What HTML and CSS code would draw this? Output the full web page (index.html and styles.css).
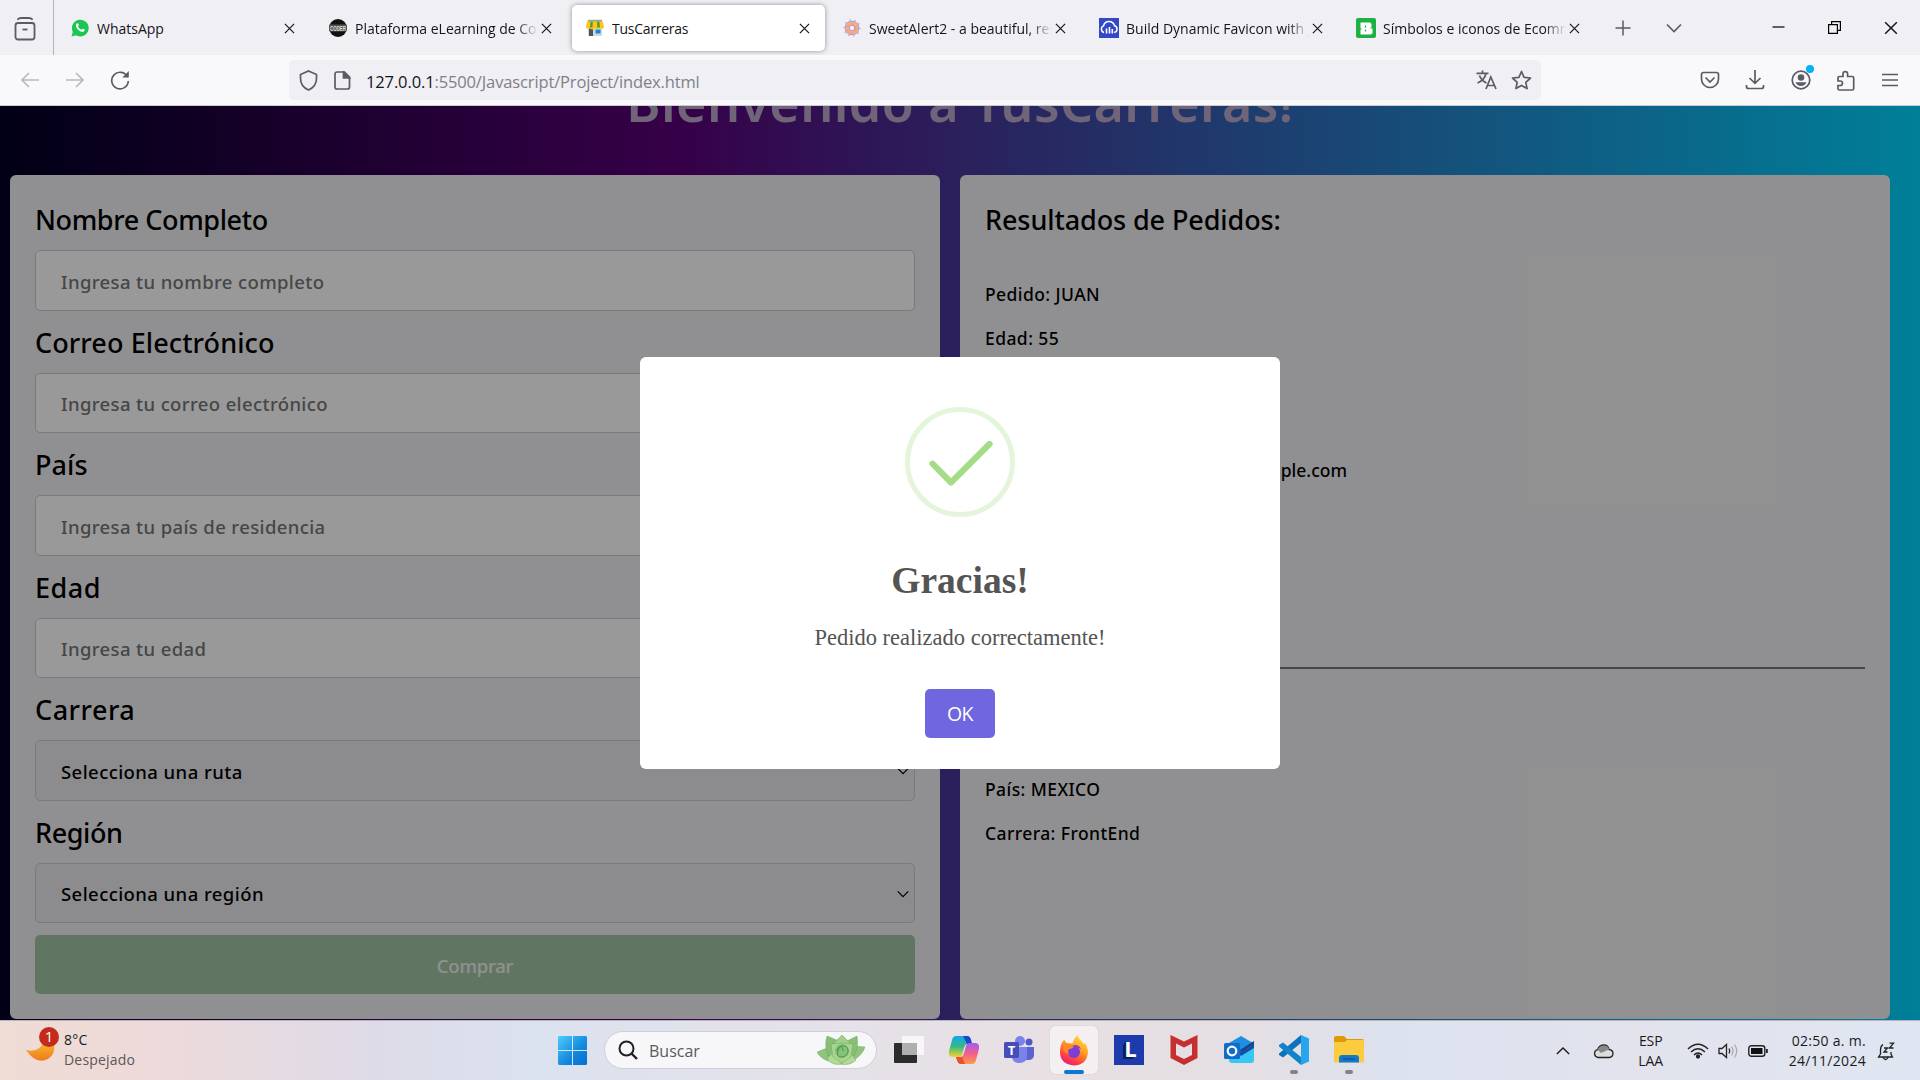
FILE: index.html
```html
<!DOCTYPE html>
<html lang="es">
<head>
<meta charset="utf-8">
<title>TusCarreras</title>
<link rel="stylesheet" href="styles.css">
</head>
<body>
<svg class="defs" aria-hidden="true">
  <symbol id="x" viewBox="0 0 12 12"><path d="M1 1l10 10M11 1L1 11" fill="none" stroke="currentColor" stroke-width="1.3"/></symbol>
  <symbol id="chev" viewBox="0 0 16 16"><path d="M1 4.500l7 7 7-7" fill="none" stroke="currentColor" stroke-width="1.600"/></symbol>
</svg>

<header class="tabs">
  <div class="view"><svg width="22" height="24" viewBox="0 0 22 24" fill="none" stroke="#5b5b66" stroke-width="1.8"><path d="M4 2.200Q5 1 7 1h8q2 0 3 1.200" stroke-linecap="round"/><rect x="1.500" y="6" width="19" height="16.500" rx="2.500"/><path d="M8.500 12.500h5"/></svg></div>
  <div class="tab first">
    <svg class="fav" viewBox="0 0 18 18"><path d="M.5 17.500l1.300-4.600A8.400 8.400 0 1 1 5 16.300z" fill="#1dc552"/><path d="M5.700 4.600c.5-.5 1.200-.5 1.500.2l.6 1.300c.1.500-.5 1-.8 1.300.8 1.700 2 2.700 3.600 3.400.5-.5.9-1.300 1.400-1.100l1.500.8c.5.300 0 1.700-.9 2.100-1.600.8-4-.5-5.600-2.100S4 6.300 5.700 4.600z" fill="#fff"/></svg>
    <span class="name">WhatsApp</span><svg class="close"><use href="#x"/></svg>
  </div>
  <div class="tab">
    <svg class="fav" viewBox="0 0 18 18"><circle cx="9" cy="9" r="9" fill="#111"/><path d="M.8 5.500h16.400a9 9 0 0 1 0 7H.8a9 9 0 0 1 0-7z" fill="#555"/><text x="9" y="11.800" text-anchor="middle" class="coder" textLength="16" lengthAdjust="spacingAndGlyphs">CODER</text></svg>
    <span class="name fade">Plataforma eLearning de Coder</span><svg class="close"><use href="#x"/></svg>
  </div>
  <div class="tab active">
    <svg class="fav" viewBox="0 0 18 18"><path d="M2 6h14v11H2z" fill="#cfd9de"/><path d="M3 9.500h4V17H3z" fill="#46545c"/><path d="M9.500 10.500h5v4h-5z" fill="#1588e8"/><path d="M1.500 2h15L18 7.500a2 2 0 0 1-4 .5 2.500 2.500 0 0 1-5 0 2.500 2.500 0 0 1-5 0 2 2 0 0 1-4-.5z" fill="#ffc60b"/><path d="M4.500 2.500h2.300L6.500 8.500H4zM11 2.500h2.300l.7 6h-2.700z" fill="#4f9a3c"/><path d="M2 .8h14v1.600H2z" fill="#90a4ae"/></svg>
    <span class="name">TusCarreras</span><svg class="close"><use href="#x"/></svg>
  </div>
  <div class="tab">
    <svg class="fav" viewBox="0 0 18 18"><circle cx="9" cy="9" r="8" fill="none" stroke="#b7a3d8" stroke-width="1.500" stroke-dasharray="1.200 3.800"/><circle cx="9" cy="9" r="4.800" fill="none" stroke="#b58acb" stroke-width="5"/><circle cx="9" cy="9" r="4.800" fill="none" stroke="#f3b083" stroke-width="3.600"/><circle cx="8.500" cy="9.500" r="4.500" fill="none" stroke="#e4a08c" stroke-width="1.200" stroke-dasharray="3 2"/></svg>
    <span class="name fade">SweetAlert2 - a beautiful, responsive</span><svg class="close"><use href="#x"/></svg>
  </div>
  <div class="tab">
    <svg class="fav square" viewBox="0 0 20 20"><path fill="#3448c5" d="M0 0h20v20H0z"/><path d="M5 14.500a3.500 3.500 0 0 1-.5-6.600 5.700 5.700 0 0 1 11-.2 3.500 3.500 0 0 1-.3 6.800" fill="none" stroke="#fff" stroke-width="1.500"/><path d="M7.500 10.500v5M10.500 9v6.500M13.300 11v4.500" stroke="#fff" stroke-width="1.600"/></svg>
    <span class="name fade">Build Dynamic Favicon with JS</span><svg class="close"><use href="#x"/></svg>
  </div>
  <div class="tab">
    <svg class="fav square" viewBox="0 0 20 20"><rect width="20" height="20" rx="2" fill="#1cb142"/><path d="M4.500 4.500h10v1h1v4h-1v1h2v5h-1v1h-11v-5h1v-1h-1z" fill="#fff"/><path d="M9.500 7.500v2M9.500 11.500v2" stroke="#1cb142" stroke-width="1.200"/></svg>
    <span class="name fade">Símbolos e iconos de Ecommerce</span><svg class="close"><use href="#x"/></svg>
  </div>
  <div class="newtab">
    <svg width="16" height="16" viewBox="0 0 16 16"><path d="M8 .5v15M.5 8h15" stroke="#5b5b66" stroke-width="1.500"/></svg>
    <svg width="16" height="16" class="grey"><use href="#chev"/></svg>
  </div>
  <div class="winbtns">
    <svg width="13" height="13" viewBox="0 0 13 13"><path d="M.5 6h12" stroke="#000" stroke-width="1.200"/></svg>
    <svg width="13" height="13" viewBox="0 0 13 13" fill="none" stroke="#000" stroke-width="1.200"><path d="M.6 3.600h8.800v8.800H.6zM3.600 3.600V.6h8.800v8.800h-3"/></svg>
    <svg width="14" height="14"><use href="#x"/></svg>
  </div>
</header>

<nav class="bar">
  <div class="nav">
    <svg width="20" height="18" viewBox="0 0 20 18" class="off"><path d="M19 9H2M9 2L2 9l7 7"/></svg>
    <svg width="20" height="18" viewBox="0 0 20 18" class="off"><path d="M1 9h17M11 2l7 7-7 7"/></svg>
    <svg width="20" height="20" viewBox="0 0 20 20"><path d="M17.500 7A8.300 8.300 0 1 0 18.300 11"/><path d="M18.800 1v6.500h-6.500z" fill="#5b5b66" stroke="none"/></svg>
  </div>
  <div class="url">
    <svg width="19" height="21" viewBox="0 0 19 21"><path d="M9.500 1L17.500 4.500v4C17.500 14 14 18 9.500 20 5 18 1.500 14 1.500 8.500v-4z"/></svg>
    <svg width="17" height="19" viewBox="0 0 17 19"><path d="M3 1h7.500L15.500 6v10a2 2 0 0 1-2 2H3a2 2 0 0 1-2-2V3a2 2 0 0 1 2-2z"/><path d="M9.500 1v6h6z" fill="#5b5b66"/></svg>
    <span class="addr"><b>127.0.0.1</b>:5500/Javascript/Project/index.html</span>
    <svg width="21" height="20" viewBox="0 0 21 20"><path d="M.5 3.300h12M6.500.5v3M10 3.500C9 8 5 11.500 1.500 13M3.500 5.500c1 3 4 6 7 7.500M10 19l4.800-12L20 19M11.500 15.500h6.500"/></svg>
    <svg width="21" height="21" viewBox="0 0 21 21"><path d="M10.500 1.500l2.600 5.800 6.400.7-4.700 4.300 1.300 6.300-5.600-3.200-5.600 3.200 1.300-6.300L1.500 8l6.400-.7z" stroke-linejoin="round"/></svg>
  </div>
  <div class="tools">
    <svg width="20" height="18" viewBox="0 0 20 18"><path d="M3.500 1.500h13a2 2 0 0 1 2 2V8a8.500 8.500 0 0 1-17 0V3.500a2 2 0 0 1 2-2z"/><path d="M5.500 6.500L10 11l4.500-4.500"/></svg>
    <svg width="20" height="20" viewBox="0 0 20 20"><path d="M10 0v13M4.500 8L10 13.300 15.500 8M1.500 15v1.500a2 2 0 0 0 2 2h13a2 2 0 0 0 2-2V15"/></svg>
    <span class="acct"><svg width="20" height="20" viewBox="0 0 20 20"><circle cx="10" cy="10" r="8.800"/><circle cx="10" cy="7.500" r="3.300" fill="#5b5b66" stroke="none"/><path d="M4.500 12.300h11Q14 16 10 16t-5.500-3.700z" fill="#5b5b66" stroke="none"/></svg></span>
    <svg width="20" height="21" viewBox="0 0 20 21"><path d="M2 11V8a1.500 1.500 0 0 1 1.500-1.500H7V4a2.300 2.300 0 0 1 4.600 0v2.500h4.600a1.500 1.500 0 0 1 1.500 1.500v10.500a1.500 1.500 0 0 1-1.500 1.500H3.500A1.500 1.500 0 0 1 2 18.500v-3h2.200a2.200 2.200 0 0 0 0-4.500z"/></svg>
    <svg width="16" height="16" viewBox="0 0 16 16"><path d="M0 2.500h16M0 8h16M0 13.500h16"/></svg>
  </div>
</nav>

<main class="page">
  <h1>Bienvenido a TusCarreras!</h1>
  <div class="cols">
    <form class="card">
      <label class="tight">Nombre Completo</label><div class="field">Ingresa tu nombre completo</div>
      <label>Correo Electrónico</label><div class="field">Ingresa tu correo electrónico</div>
      <label>País</label><div class="field">Ingresa tu país de residencia</div>
      <label class="wide">Edad</label><div class="field">Ingresa tu edad</div>
      <label class="wide">Carrera</label><div class="field select">Selecciona una ruta<svg width="12" height="12"><use href="#chev"/></svg></div>
      <label class="tight">Región</label><div class="field select">Selecciona una región<svg width="12" height="12"><use href="#chev"/></svg></div>
      <div class="buy">Comprar</div>
    </form>
    <section class="card results">
      <h2>Resultados de Pedidos:</h2>
      <p>Pedido: JUAN</p>
      <p>Edad: 55</p>
      <p></p>
      <p></p>
      <p class="mail">Correo: juan@example.com</p>
      <hr>
      <p>País: MEXICO</p>
      <p>Carrera: FrontEnd</p>
    </section>
  </div>
  <div class="overlay">
    <div class="modal">
      <svg width="110" height="110" viewBox="0 0 110 110" fill="none"><circle cx="55" cy="55" r="52.500" stroke="#e4f5db" stroke-width="5"/><path d="M27.500 56.700L46 75.500 84.500 37" stroke="#a5dc86" stroke-width="6.200" stroke-linecap="round" stroke-linejoin="round"/></svg>
      <div class="title">Gracias!</div>
      <div class="msg">Pedido realizado correctamente!</div>
      <div class="ok">OK</div>
    </div>
  </div>
</main>

<footer class="task">
  <div class="weather">
    <svg width="36" height="40" viewBox="0 0 36 40"><defs><linearGradient id="mo" x2="0" y2="1"><stop stop-color="#f7b733"/><stop offset="1" stop-color="#ef7c1b"/></linearGradient></defs><path d="M0 23q14 3 17-8l11 1q2 11-6 16-12 6-22-9z" fill="url(#mo)"/><circle cx="23" cy="10" r="10" fill="#c42b1c"/><text x="23" y="15" text-anchor="middle" class="badge">1</text></svg>
    <div class="wtext"><div>8°C</div><div class="dim">Despejado</div></div>
  </div>
  <div class="apps">
    <svg class="win" width="29" height="29" viewBox="0 0 29 29"><defs><linearGradient id="w" x2="1" y2="1"><stop stop-color="#4ccbff"/><stop offset=".6" stop-color="#1287dc"/><stop offset="1" stop-color="#0270d0"/></linearGradient></defs><path d="M1 0h13v14H0V1zM15 0h13l1 1v13H15zM0 15h14v14H1l-1-1zM15 15h14v13l-1 1H15z" fill="url(#w)"/></svg>
    <div class="search">
      <svg width="20" height="20" viewBox="0 0 20 20" fill="none" stroke="#222" stroke-width="2"><circle cx="8.500" cy="8.500" r="7"/><path d="M13.500 13.500l5.500 5.500" stroke-width="2.400"/></svg>
      <span>Buscar</span>
      <svg width="48" height="30" viewBox="0 0 48 30" stroke="#6da864" stroke-width=".5"><path d="M0 17l13-5 6 4 1 9-9 1Q3 23 0 17zM48 12l-12-1-9 14 8 1q10-5 13-14z" fill="#8fc47c"/><path d="M10 1l12 5-2 13-9 2Q7 11 10 1zM40 1l-10 5-4 14 11 1q5-9 3-20z" fill="#86bf74"/><path d="M10 24l7-8 8 13q-10 2-15-5zM39 25l-7-9-8 13q9 2 15-4z" fill="#b3da92"/><path d="M25 0l8 8-8 10-8-10z" fill="#a2d089"/><path d="M14 9l11-1 11 1-2 13-9 6-9-6z" fill="#a8d58f"/><circle cx="25" cy="16" r="6.500" fill="#86c377"/><path d="M20 16q1-5 6-5t5 5-6 6-4-6 4-3 2 3" fill="none" stroke="#4c9455" stroke-width="1"/></svg>
    </div>
    <div class="app"><svg width="30" height="30" viewBox="0 0 30 30"><rect y="8" width="23" height="20" rx="1" fill="#2c2c2a"/><rect x="8" y="1" width="22" height="19" rx="1" fill="#fff" opacity=".7"/><rect x="8" y="8" width="15" height="12" fill="#aaa" opacity=".8"/></svg></div>
    <div class="app"><svg width="30" height="28" viewBox="0 0 30 28"><defs><linearGradient id="ca" x2="0" y2="1"><stop stop-color="#17a4ee"/><stop offset=".5" stop-color="#35ba84"/><stop offset="1" stop-color="#f6d22b"/></linearGradient><linearGradient id="cb" x2="0" y2="1"><stop stop-color="#a35bf5"/><stop offset=".5" stop-color="#f0608a"/><stop offset="1" stop-color="#ff9a4b"/></linearGradient></defs><path d="M7 0h11q3 0 4 4l1 4h-4q-3 0-4 4l-2 7q-1 2-4 2H4q-5 0-4-6L3 4q1-4 4-4z" fill="url(#ca)"/><path d="M14 0h4q3 0 4 4l1 4h-5z" fill="#1b48c8"/><path d="M23 28H12q-3 0-4-4l-1-3h4q3 0 4-4l2-7q1-3 4-3h5q5 0 4 6l-3 11q-1 4-4 4z" fill="url(#cb)"/><path d="M16 28h-4q-3 0-4-4l-1-3h6z" fill="#e5542f"/></svg></div>
    <div class="app"><svg width="30" height="28" viewBox="0 0 30 28"><circle cx="16" cy="5" r="5" fill="#7b83eb"/><circle cx="25" cy="6" r="3.500" fill="#5059c9"/><path d="M21 11h9v8q0 5-6 5h-3z" fill="#5b63d0"/><path d="M8 11h15v9q0 7-7.500 7T8 20z" fill="#7b83eb"/><rect y="6" width="15" height="16" rx="1.500" fill="#464eb8"/><text x="7.500" y="18.500" text-anchor="middle" class="glyph s13">T</text></svg></div>
    <div class="app run tile"><svg width="30" height="31" viewBox="0 0 30 31"><defs><linearGradient id="fx" x1=".8" x2=".3" y2="1"><stop stop-color="#ffe63f"/><stop offset=".45" stop-color="#ff9a22"/><stop offset=".75" stop-color="#ff4740"/><stop offset="1" stop-color="#e6197c"/></linearGradient></defs><path d="M4 6l1.500-1 2 3 6 .5Q15 3 18.500 0q1 4 5 7l1 2 1.500-1Q29 12 29 17q-1 13-14 13.500Q2 29.500 1 18q0-8 3-12z" fill="url(#fx)"/><circle cx="15" cy="17" r="6" fill="#7a3fd8"/><path d="M5 9q5-1 10 2-1 3-5 3-2 2 0 5-5-1-6-5z" fill="#ff8a20"/><path d="M13 11q6-3 9 3-2-1-4-1z" fill="#a033c8"/></svg></div>
    <div class="app"><svg width="30" height="30" viewBox="0 0 30 30"><path fill="#1d3bac" d="M0 0h30v30H0z"/><path d="M9 24V10l3-4v15h9l-3 3z" fill="#0d2150"/><text x="16.500" y="22" text-anchor="middle" class="glyph s22">L</text></svg></div>
    <div class="app"><svg width="28" height="30" viewBox="0 0 28 30"><path d="M.5 0L14 6.500 27.500 0v23L14 30 .5 23zM6 8.500V20l8 4 8-4V8.500l-8 4z" fill="#c5302f" fill-rule="evenodd"/></svg></div>
    <div class="app"><svg width="30" height="28" viewBox="0 0 30 28"><path d="M5 7l12-7 12 7v12H5z" fill="#1f8ee0"/><path d="M13 16L30 5v6l-13 9z" fill="#123f8c"/><path d="M5 14l9 2 16-5v13q0 3-3 3H8q-3 0-3-3z" fill="#38c6f4"/><path d="M14 17L30 7v5L17 20z" fill="#17509f"/><rect y="7" width="16" height="16" rx="1.500" fill="#0f6cc9"/><circle cx="8" cy="15" r="4.300" fill="none" stroke="#fff" stroke-width="2.200"/></svg></div>
    <div class="app dot"><svg width="30" height="30" viewBox="0 0 30 30"><path d="M22 0l8 3.500v23L22 30z" fill="#29a5ee"/><path d="M22 0v8L4 22.500 0 20v-1.500z" fill="#0b73bd"/><path d="M22 30v-8L4 7.500 0 10v1.500z" fill="#1183cc"/></svg></div>
    <div class="app dot"><svg width="30" height="28" viewBox="0 0 30 28"><path d="M0 2q0-2 2-2h8l3 3h15q2 0 2 2v8H0z" fill="#dd9a06"/><path d="M0 6h11l2-2h16l1 1v20q0 1.500-1.500 1.500h-27Q0 26.500 0 25z" fill="#fdcb3e"/><path d="M5 26.500V22q0-3 3-3h14q3 0 3 3v4.500z" fill="#1478c9"/><path d="M9 23h12" stroke="#0c4e91" stroke-width="1.200"/></svg></div>
  </div>
  <div class="tray">
    <svg width="14" height="14" class="up"><use href="#chev"/></svg>
    <svg width="21" height="15" viewBox="0 0 21 15"><path d="M5 13.500a4 4 0 0 1-.5-7.800Q6.500 1 11 1q4 0 5 4.500 4 .5 4 4t-4 4z" fill="#ddd" stroke="#222" stroke-width="1.300"/><path d="M4.500 5.700Q6.500 1.500 11 1.500t5 4L8 9z" fill="#888"/></svg>
    <div class="lang">ESP<br>LAA</div>
    <svg width="22" height="16" viewBox="0 0 22 16" fill="none" stroke="#222" stroke-width="1.500"><path d="M1 6Q11-3.500 21 6M4 9q7-6.500 14 0M7 12q4-4 8 0"/><circle cx="11" cy="13.500" r="1.400" fill="#222"/></svg>
    <svg width="21" height="16" viewBox="0 0 21 16" fill="none" stroke="#222" stroke-width="1.300"><path d="M1 5.500h3L8.500 1.500v13L4 10.500H1z"/><path d="M11 5.500q1.500 2.500 0 5"/><path d="M13.500 3.500q3 4.500 0 9M16.500 1.500q4.500 6.500 0 13" stroke="#aaa"/></svg>
    <svg width="20" height="12" viewBox="0 0 20 12"><rect x=".8" y=".8" width="16" height="10.400" rx="2.500" fill="none" stroke="#222" stroke-width="1.400"/><rect x="3" y="3" width="11.500" height="6" fill="#111"/><path d="M18 4h1.800v4H18z" fill="#222"/></svg>
    <div class="clock">02:50 a. m.<br>24/11/2024</div>
    <svg width="18" height="19" viewBox="0 0 18 19" fill="none" stroke="#222" stroke-width="1.300"><path d="M6 2.500Q3.500 4 3.500 8v4L1.500 15h14L14 12v-2M6 15.500q2.500 4 5 0"/><path d="M7 6h3.500L7 10h3.500M12.500 1.200h4L12.500 6h4"/></svg>
  </div>
</footer>
</body>
</html>
```
FILE: styles.css
```css
* { box-sizing: border-box; }
body { margin: 0; width: 1920px; height: 1080px; overflow: hidden; display: flex; flex-direction: column; font-family: "Open Sans", "Noto Sans", sans-serif; }
svg { display: block; flex: none; }
.defs { display: none; }

.tabs { height: 55px; flex: none; background: #f0eff4; display: flex; padding-right: 22px; color: #15141a; }
.view { width: 54px; border-right: 1px solid #b5b4bb; padding: 17px 0 0 14px; }
.tab { width: 253px; height: 46px; margin: 5px 0 0 4px; padding: 0 16px 0 14px; display: flex; align-items: center; border-radius: 5px; font-size: 14px; }
.tab.first { padding-left: 13px; }
.tab.active { background: #fff; box-shadow: 0 0 5px rgba(0,0,0,.4); letter-spacing: -.25px; padding-right: 15px; }
.fav { width: 18px; height: 18px; }
.fav.square { width: 20px; height: 20px; margin: 0 -1px; }
.coder { font: bold 7px "Liberation Sans", sans-serif; fill: #ddd; }
.name { flex: 1; margin-left: 8px; overflow: hidden; white-space: nowrap; }
.fade { -webkit-mask-image: linear-gradient(90deg, #000 88%, transparent); mask-image: linear-gradient(90deg, #000 88%, transparent); }
.close { width: 11px; height: 11px; margin-left: 3px; }
.newtab { display: flex; gap: 35px; align-items: center; margin-left: 19px; }
.grey { color: #5b5b66; }
.winbtns { display: flex; gap: 43px; align-items: center; margin-left: auto; }

.bar { height: 51px; flex: none; background: #f9f9fb; border-bottom: 1px solid #ccccd0; display: flex; align-items: center; padding: 0 22px 0 20px; }
.bar svg { fill: none; stroke: #5b5b66; stroke-width: 1.7; }
.bar .off { stroke: #b9b9be; }
.nav { display: flex; gap: 25px; align-items: center; width: 269px; }
.url { width: 1252px; height: 40px; border-radius: 5px; background: #f0eff4; display: flex; align-items: center; padding: 0 9px 0 10px; }
.url svg + svg { margin-left: 16px; }
.url .addr + svg + svg { margin-left: 14px; }
.addr { flex: 1; margin-left: 15px; font-size: 16.5px; letter-spacing: -.13px; color: #808088; padding-top: 2px; }
.addr b { font-weight: 400; color: #15141a; }
.tools { display: flex; gap: 25.6px; align-items: center; margin-left: auto; }
.acct { position: relative; }
.acct::after { content: ""; position: absolute; right: -3px; top: -5px; width: 8px; height: 8px; border-radius: 50%; background: #00b3f4; }

.page { height: 914px; flex: none; position: relative; overflow: hidden; font-family: "Noto Sans", "Open Sans", sans-serif; font-weight: 500; background: linear-gradient(90deg, #020024 0%, #5a0078 35%, #48369a 50%, #00d4ff 100%); }
.page h1 { height: 69px; line-height: 72px; margin: -40px 0 40px; text-align: center; font-size: 52px; font-weight: 600; letter-spacing: .4px; color: #bba9c9; }
.cols { display: flex; gap: 20px; padding-left: 10px; }
.card { width: 930px; height: 844px; border-radius: 6px; background: #f1f1f4; padding: 25px; }
label, .results h2 { display: block; height: 37px; line-height: 39px; font-size: 27px; font-weight: 500; color: #000; }
label { margin-bottom: 13px; letter-spacing: .1px; }
.tight { letter-spacing: -.4px; }
.wide { letter-spacing: .5px; }
.field { height: 60.5px; margin-bottom: 12px; border: 1px solid #ccc; border-radius: 5px; background: #fff; color: #757575; font-size: 18.5px; line-height: 61px; letter-spacing: .37px; padding: 2px 5px 0 25px; display: flex; justify-content: space-between; align-items: center; }
.field.select { background: #e9e9ed; color: #000; letter-spacing: .43px; }
.buy { height: 59px; line-height: 61px; border-radius: 5px; background: #a2c5a3; color: #f0f2f0; text-align: center; font-size: 18.5px; letter-spacing: -.2px; }
.results h2 { margin: 0 0 35px; letter-spacing: -.1px; }
.results p { margin: 0; height: 44px; line-height: 44px; font-size: 17.5px; letter-spacing: .42px; color: #000; }
.results .mail { width: 362px; text-align: right; letter-spacing: 0; }
.results hr { margin: 175px 0 98px; border: 0; height: 2px; background: #777; }
.overlay { position: absolute; inset: 0; background: rgba(0,0,0,.4); display: flex; justify-content: center; align-items: flex-start; padding-top: 251px; }
.modal { width: 640px; height: 412px; border-radius: 6px; background: #fff; display: flex; flex-direction: column; align-items: center; padding-top: 50px; color: #545454; font-family: "Liberation Serif", serif; font-weight: 400; }
.title { margin-top: 41px; font-size: 37.5px; font-weight: 700; line-height: 46px; }
.msg { margin-top: 20px; font-size: 22.5px; line-height: 28px; }
.ok { margin-top: 37px; width: 70px; height: 49px; border-radius: 5px; background: #7066e0; color: #fff; text-align: center; font: 500 19.5px/49px "Open Sans", sans-serif; letter-spacing: -.5px; }

.task { flex: 1; border-top: 1px solid #b9b4bd; background: linear-gradient(90deg, #efdcd4 0, #eedada 8%, #dddbe8 20%, #dbe2ef 28%, #e3e2ea 40%, #e8e0e3 55%, #e4dfe3 65%, #dce2ef 73%, #e2e3ed 85%, #dfe6f2 100%); display: flex; font-size: 14px; color: #1b1b1b; }
.weather { width: 558px; display: flex; padding: 6px 0 0 26px; }
.wtext { margin-left: 2px; padding-top: 3px; line-height: 20px; letter-spacing: .2px; }
.dim { color: #5b5759; }
.badge { font: 15px "Open Sans", sans-serif; fill: #fff; }
.apps { display: flex; align-items: center; height: 58px; }
.win { margin-right: 17px; }
.search { width: 273px; height: 38px; border-radius: 19px; background: #f7f7fa; border: 1px solid #cfcfd8; display: flex; align-items: center; padding: 0 11px 0 13px; margin-right: 4px; font-size: 16px; color: #5a5a5a; }
.search span { flex: 1; margin-left: 11px; padding-top: 1px; }
.app { position: relative; width: 48px; height: 48px; display: flex; align-items: center; justify-content: center; margin: 0 3.5px; }
.tile { background: #f4f0f1; border-radius: 5px; box-shadow: 0 0 1px #aaa; }
.run::after, .dot::after { content: ""; position: absolute; bottom: 0; width: 20px; height: 4px; border-radius: 2px; background: #0a78d4; }
.dot::after { width: 8px; background: #858387; }
.glyph { font-family: "Open Sans", sans-serif; font-weight: 700; fill: #fff; }
.s13 { font-size: 13px; }
.s22 { font-size: 22px; }
.tray { display: flex; align-items: center; height: 60px; margin-left: auto; padding-right: 25px; line-height: 20px; letter-spacing: -.1px; }
.up { transform: rotate(180deg); margin-right: 23px; }
.lang { width: 40px; margin: 0 16px 0 17px; text-align: center; }
.tray .lang + svg + svg { margin-left: 9px; }
.tray .lang + svg + svg + svg { margin-left: 9px; }
.clock { margin: 0 11px 0 21px; text-align: right; white-space: nowrap; letter-spacing: .3px; }
```
